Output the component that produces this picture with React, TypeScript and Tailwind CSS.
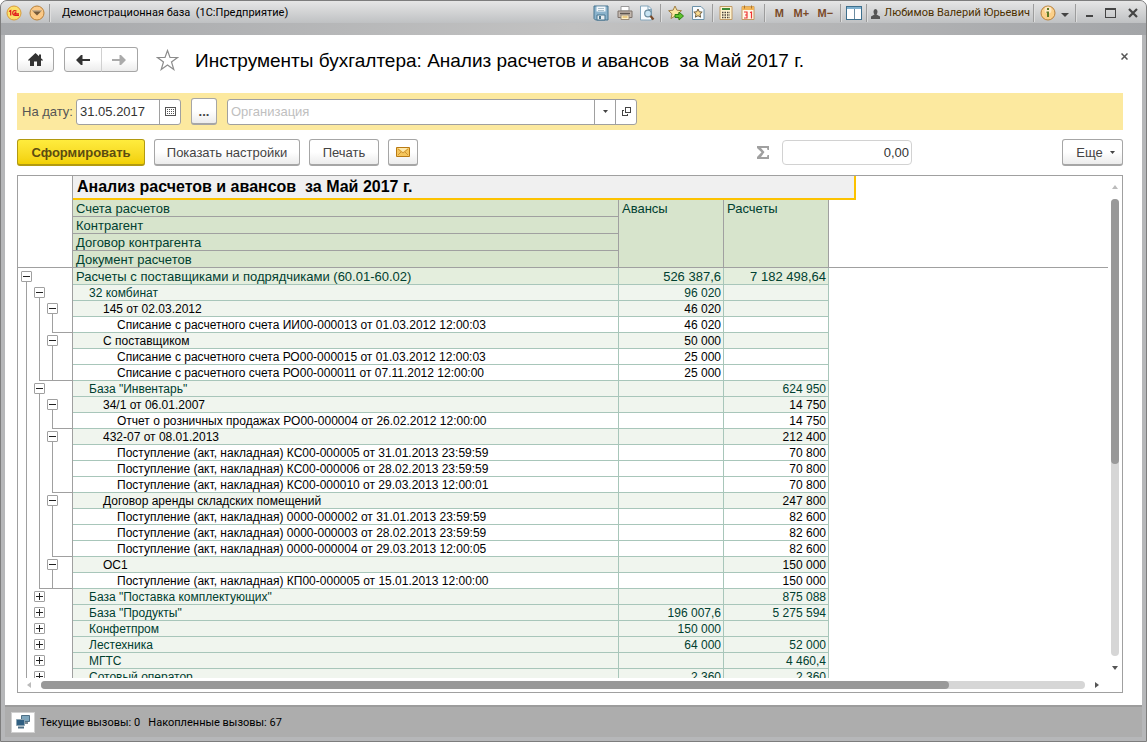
import React from 'react';

type Slot = 'none' | 'line' | 'end' | 'minus' | 'plus';

interface Row {
  level: number;
  text: string;
  advance?: string;
  balance?: string;
  tree: string;
}

// One letter per tree level: m - open, p - closed, l - line, e - end of group, space - nothing
const slotNames: Record<string, Slot> = { m: 'minus', p: 'plus', l: 'line', e: 'end', ' ': 'none' };

const rows: Row[] = [
  { level: 0, text: 'Расчеты с поставщиками и подрядчиками (60.01-60.02)', advance: '526 387,6', balance: '7 182 498,64', tree: 'm  ' },
  { level: 1, text: '32 комбинат', advance: '96 020', tree: 'lm ' },
  { level: 2, text: '145 от 02.03.2012', advance: '46 020', tree: 'llm' },
  { level: 3, text: 'Списание с расчетного счета ИИ00-000013 от 01.03.2012 12:00:03', advance: '46 020', tree: 'lle' },
  { level: 2, text: 'С поставщиком', advance: '50 000', tree: 'llm' },
  { level: 3, text: 'Списание с расчетного счета РО00-000015 от 01.03.2012 12:00:03', advance: '25 000', tree: 'lll' },
  { level: 3, text: 'Списание с расчетного счета РО00-000011 от 07.11.2012 12:00:00', advance: '25 000', tree: 'lee' },
  { level: 1, text: 'База "Инвентарь"', balance: '624 950', tree: 'lm ' },
  { level: 2, text: '34/1 от 06.01.2007', balance: '14 750', tree: 'llm' },
  { level: 3, text: 'Отчет о розничных продажах РО00-000004 от 26.02.2012 12:00:00', balance: '14 750', tree: 'lle' },
  { level: 2, text: '432-07 от 08.01.2013', balance: '212 400', tree: 'llm' },
  { level: 3, text: 'Поступление (акт, накладная) КС00-000005 от 31.01.2013 23:59:59', balance: '70 800', tree: 'lll' },
  { level: 3, text: 'Поступление (акт, накладная) КС00-000006 от 28.02.2013 23:59:59', balance: '70 800', tree: 'lll' },
  { level: 3, text: 'Поступление (акт, накладная) КС00-000010 от 29.03.2013 12:00:01', balance: '70 800', tree: 'lle' },
  { level: 2, text: 'Договор аренды складских помещений', balance: '247 800', tree: 'llm' },
  { level: 3, text: 'Поступление (акт, накладная) 0000-000002 от 31.01.2013 23:59:59', balance: '82 600', tree: 'lll' },
  { level: 3, text: 'Поступление (акт, накладная) 0000-000003 от 28.02.2013 23:59:59', balance: '82 600', tree: 'lll' },
  { level: 3, text: 'Поступление (акт, накладная) 0000-000004 от 29.03.2013 12:00:05', balance: '82 600', tree: 'lle' },
  { level: 2, text: 'ОС1', balance: '150 000', tree: 'llm' },
  { level: 3, text: 'Поступление (акт, накладная) КП00-000005 от 15.01.2013 12:00:00', balance: '150 000', tree: 'lee' },
  { level: 1, text: 'База "Поставка комплектующих"', balance: '875 088', tree: 'lp ' },
  { level: 1, text: 'База "Продукты"', advance: '196 007,6', balance: '5 275 594', tree: 'lp ' },
  { level: 1, text: 'Конфетпром', advance: '150 000', tree: 'lp ' },
  { level: 1, text: 'Лестехника', advance: '64 000', balance: '52 000', tree: 'lp ' },
  { level: 1, text: 'МГТС', balance: '4 460,4', tree: 'lp ' },
  { level: 1, text: 'Сотовый оператор', advance: '2 360', balance: '2 360', tree: 'lp ' },
];

const indents = ['pl-[3px]', 'pl-[16px]', 'pl-[30px]', 'pl-[44px]'];
const rowColors = [
  'bg-[#e4eedd] text-[#004030]',
  'bg-[#f0f5ee] text-[#004030]',
  'bg-[#f0f5ee] text-black',
  'bg-white text-black',
];

const btn = 'flex items-center justify-center rounded-[3px] border border-[#a6a6a6] bg-linear-to-b from-white from-50% to-[#ececec] text-[#444]';

function TreeSlot({ kind }: { kind: Slot }) {
  if (kind === 'minus' || kind === 'plus') {
    return (
      <span className="flex w-[13px] flex-col items-center">
        <button
          aria-label={kind === 'minus' ? 'Свернуть' : 'Развернуть'}
          className="flex size-[11px] shrink-0 items-center justify-center rounded-[1px] border border-[#a0a0a0] bg-white"
        >
          <svg width="7" height="7" viewBox="0 0 7 7" shapeRendering="crispEdges" fill="#222">
            <path d={kind === 'minus' ? 'M0 3h7v1H0z' : 'M0 3h3V0h1v3h3v1H4v3H3V4H0z'} />
          </svg>
        </button>
        {kind === 'minus' && <span className="w-px flex-1 bg-[#a0a0a0]" />}
      </span>
    );
  }
  return <span className="w-[13px]" />;
}

function TreeCell({ row }: { row: Row }) {
  const slots = row.tree.split('').map((c) => slotNames[c]);
  const firstEnd = slots.indexOf('end');
  return (
    <div className={`flex w-[54px] pl-[2px] ${row.level === 0 ? 'h-[17px]' : 'h-[16px]'}`}>
      {slots.map((kind, i) => {
        if (kind === 'line' || kind === 'end') {
          const elbow = firstEnd >= 0 && i >= firstEnd;
          return (
            <span key={i} className="flex w-[13px]">
              <span className={`w-[6px] border-[#a0a0a0] ${elbow && i > firstEnd ? 'border-b' : ''}`} />
              <span className={`w-[7px] border-l border-[#a0a0a0] ${elbow ? 'border-b' : ''}`} />
            </span>
          );
        }
        return (
          <span key={i} className={`flex ${row.level === 0 ? 'pt-[3px]' : 'pt-[2px]'}`}>
            <TreeSlot kind={kind} />
          </span>
        );
      })}
      <span className={`flex-1 border-[#a0a0a0] ${firstEnd >= 0 ? 'border-b' : ''}`} />
    </div>
  );
}

function Report() {
  const headCell = 'border-r border-b border-[#a0a0a0] bg-[#d7e4cc] p-0 pt-px pl-[3px] text-left align-top font-normal';
  const cell = 'overflow-hidden border-r border-b border-[#a8c6ba] p-0 pt-px whitespace-nowrap';
  return (
    <table className="w-full table-fixed border-separate border-spacing-0 text-[12px] leading-[14px]">
      <colgroup>
        <col className="w-[55px]" />
        <col className="w-[546px]" />
        <col className="w-[105px]" />
        <col className="w-[105px]" />
        <col className="w-[27px]" />
        <col />
      </colgroup>
      <thead className="text-[13px] leading-[15px] text-[#004030]">
        <tr>
          <td rowSpan={5} className="border-r border-b border-[#a0a0a0] p-0" />
          <th colSpan={4} className="h-[24px] border-r-2 border-b-2 border-[#fcc200] bg-[#f0f0f0] p-0 pl-[4px] text-left text-[16px] leading-[20px] font-bold whitespace-pre text-black">
            Анализ расчетов и авансов  за Май 2017 г.
          </th>
          <td className="p-0" />
        </tr>
        <tr>
          <th className={`h-[17px] ${headCell}`}>Счета расчетов</th>
          <th rowSpan={4} className={headCell}>Авансы</th>
          <th rowSpan={4} className={headCell}>Расчеты</th>
          <td rowSpan={4} colSpan={2} className="border-b border-[#a0a0a0] p-0" />
        </tr>
        <tr><th className={`h-[17px] ${headCell}`}>Контрагент</th></tr>
        <tr><th className={`h-[17px] ${headCell}`}>Договор контрагента</th></tr>
        <tr><th className={`h-[17px] ${headCell}`}>Документ расчетов</th></tr>
      </thead>
      <tbody>
        {rows.map((row, i) => (
          <tr key={i} className={row.level === 0 ? 'text-[13px] leading-[15px]' : ''}>
            <td className="border-r border-[#a0a0a0] p-0"><TreeCell row={row} /></td>
            <td className={`${cell} ${indents[row.level]} ${rowColors[row.level]}`}>{row.text}</td>
            <td className={`${cell} pr-[2px] text-right ${rowColors[row.level]}`}>{row.advance}</td>
            <td className={`${cell} pr-[2px] text-right ${rowColors[row.level]}`}>{row.balance}</td>
          </tr>
        ))}
      </tbody>
    </table>
  );
}

function Sep() {
  return <span className="mx-[3px] h-[18px] w-[2px] border-l border-[#9c9c9c] bg-[#dedede]" />;
}

function BarButton({ label, className, children }: { label: string; className: string; children: React.ReactNode }) {
  return (
    <button aria-label={label} className={`flex h-[22px] shrink-0 items-center justify-center ${className}`}>
      {children}
    </button>
  );
}

function TitleBar() {
  return (
    <header className="flex h-[34px] shrink-0 items-start bg-linear-to-r from-[#a6a8ab] via-[#c2c2c2] to-[#a3a5a8] text-[11px]">
      <div className="flex h-[22px] w-full items-center bg-linear-to-b from-[#e6e6e6] to-[#bfc1c3] pt-[2px]">
        <BarButton label="Главное меню" className="ml-[5px] w-4">
          <svg width="16" height="16" viewBox="0 0 16 16">
            <circle cx="8" cy="8" r="7" fill="#fbe06a" stroke="#d89a3c" />
            <path d="M3 6.500 4.700 5.500v5M10.500 6.300C8.500 4.800 6.700 6 6.700 8s1.300 2.400 2.800 2.400H13M10.300 8c-.8-.6-1.600-.2-1.600.4s.6.500 1.200.5H13" fill="none" stroke="#e0191c" strokeWidth="1.200" />
          </svg>
        </BarButton>
        <BarButton label="Сервис" className="ml-[6px] w-[18px]">
          <svg width="16" height="16" viewBox="0 0 16 16">
            <circle cx="8" cy="8" r="7" fill="#fbc987" stroke="#b8803a" />
            <path d="M3 5.500h10L8 10.500z" fill="#75593a" />
            <path d="M3.500 5.500h9v1h-9z" fill="#fff0d5" opacity=".6" />
          </svg>
        </BarButton>
        <Sep />
        <h1 className="ml-[8px] flex-1 truncate pt-px font-[Roboto] whitespace-pre text-black">Демонстрационная база  (1С:Предприятие)</h1>
        <BarButton label="Сохранить" className="w-6">
          <svg width="16" height="16" viewBox="0 0 16 16">
            <path d="M1 1h14v14H2.500L1 13.500z" fill="#8bb3cc" stroke="#47758f" />
            <path d="M3.500 1.500h9v5h-9z" fill="#f4f8fa" />
            <path d="M5 3.500h6M5 5.500h6" stroke="#aac0cc" />
            <path d="M4 10h8v5H4z" fill="#e8eef1" stroke="#47758f" />
            <path d="M6 11h2v3H6z" fill="#47758f" />
          </svg>
        </BarButton>
        <BarButton label="Печать" className="w-6">
          <svg width="16" height="16" viewBox="0 0 16 16">
            <path d="M4 1.500h8V6H4z" fill="#fff" stroke="#999" />
            <path d="M1 6h14v6.500H1z" fill="#c4b9b0" stroke="#7d726b" />
            <path d="M3 8.500h10" stroke="#5d5550" strokeWidth="1.500" />
            <path d="M4 10h8v4.500H4z" fill="#fff2ca" stroke="#9a8a78" />
            <path d="M5.500 12h5" stroke="#d9a441" />
          </svg>
        </BarButton>
        <BarButton label="Предварительный просмотр" className="w-5">
          <svg width="16" height="16" viewBox="0 0 16 16">
            <path d="M1.500 1h8l3 3v11h-11z" fill="#f8fcff" stroke="#84a6bb" />
            <path d="M9 1v3.500h3.500" fill="none" stroke="#84a6bb" />
            <circle cx="9" cy="8.500" r="3.300" fill="#c8e4f3" stroke="#6c8da0" strokeWidth="1.200" />
            <path d="m11.500 11 3 3.500" stroke="#7a4a28" strokeWidth="2.200" />
          </svg>
        </BarButton>
        <Sep />
        <BarButton label="Добавить в избранное" className="w-[22px]">
          <svg width="16" height="16" viewBox="0 0 16 16">
            <path d="m7 1 1.900 4.200 4.600.5L10 8.800l1 4.700-4-2.400-4 2.400 1-4.700L.6 5.700l4.500-.5z" fill="#fbe6a0" stroke="#a08048" />
            <path d="M7 9.500h4V7l4.500 4-4.500 4v-2.500H7z" fill="#5fc32e" stroke="#2d8013" />
          </svg>
        </BarButton>
        <BarButton label="Избранное" className="w-[22px]">
          <svg width="14" height="16" viewBox="0 0 14 16">
            <path d="M1.500 1.500h8.500l3 3v10H1.500z" fill="#f8fcff" stroke="#6c92a9" />
            <path d="m7 4 1.300 2.800 2.900.3L9 9.200l.6 3L7 10.700l-2.600 1.500.6-3-2.200-2.100 2.900-.3z" fill="#fbdc90" stroke="#6f5d40" />
          </svg>
        </BarButton>
        <Sep />
        <BarButton label="Калькулятор" className="w-[18px]">
          <svg width="14" height="16" viewBox="0 0 14 16">
            <path d="M1 1.500h12v13H1z" fill="#fff3cf" stroke="#c19a64" />
            <path d="M3 3h8v2H3z" fill="#3c8a38" />
            <path d="M3 7.500h8M3 10h8M3 12.500h8" stroke="#4a423c" strokeWidth="1.400" strokeDasharray="1.500 1" />
          </svg>
        </BarButton>
        <BarButton label="Календарь" className="w-[26px]">
          <svg width="14" height="16" viewBox="0 0 14 16">
            <path d="M1 1.500h12v13H1z" fill="#fff8e8" stroke="#c19a64" />
            <path d="M1 1.500h12V5H1z" fill="#f3b556" />
            <path d="M3.500.500v3M10.500.500v3" stroke="#a97431" />
            <path d="M3 7h3v3H4h2v3H3M9 7.500l1.500-.500v6.500" fill="none" stroke="#e33" strokeWidth="1.200" />
          </svg>
        </BarButton>
        <Sep />
        <BarButton label="M" className="w-5 font-bold text-[#7a4a28]">M</BarButton>
        <BarButton label="M+" className="w-6 font-bold text-[#7a4a28]">M+</BarButton>
        <BarButton label="M-" className="w-6 font-bold text-[#7a4a28]">M−</BarButton>
        <Sep />
        <BarButton label="Панели" className="w-[18px]">
          <svg width="16" height="14" viewBox="0 0 16 14" shapeRendering="crispEdges">
            <path d="M.500.500h15v13H.500z" fill="#fff" stroke="#3d6f8d" />
            <path d="M1 1h14v2H1z" fill="#7fb1d0" />
            <path d="M8 3v10" stroke="#6b8ba0" />
          </svg>
        </BarButton>
        <Sep />
        <button className="flex items-center gap-1 pt-px font-[Roboto] whitespace-nowrap text-[#4c3000]">
          <svg width="9" height="10" viewBox="0 0 9 10" fill="#555">
            <path d="M2.500 2.500a2 2.500 0 0 1 4 0c0 1.500-.6 2.500-1 3L9 7.500V10H0V7.500l3.500-2c-.4-.5-1-1.500-1-3z" />
          </svg>
          Любимов Валерий Юрьевич
        </button>
        <Sep />
        <BarButton label="О программе" className="w-5">
          <svg width="16" height="16" viewBox="0 0 16 16">
            <circle cx="8" cy="8" r="7" fill="#fbd08a" stroke="#b8803a" />
            <circle cx="8" cy="5" r="3.500" fill="#fff" opacity=".5" />
            <path d="M7 3h2v2H7zM6.500 6.500H9V12H7V8h-.5z" fill="#5d7a24" />
          </svg>
        </BarButton>
        <BarButton label="Дополнительно" className="w-[14px]">
          <svg width="8" height="5" viewBox="0 0 8 5" className="mt-[5px]" fill="#444"><path d="M0 0h8L4 4z" /></svg>
        </BarButton>
        <Sep />
        <BarButton label="Свернуть окно" className="w-[18px]">
          <svg width="7" height="10" viewBox="0 0 7 10" shapeRendering="crispEdges"><path d="M0 7h7v2H0z" fill="#444" /></svg>
        </BarButton>
        <BarButton label="Развернуть окно" className="w-6">
          <svg width="11" height="10" viewBox="0 0 11 10" shapeRendering="crispEdges"><path d="M.5 1h10v8.500H.5z" fill="none" stroke="#444" /><path d="M0 0h11v2H0z" fill="#444" /></svg>
        </BarButton>
        <BarButton label="Закрыть окно" className="mr-[2px] w-[22px]">
          <svg width="10" height="10" viewBox="0 0 10 10"><path d="m1 1 8 8M9 1 1 9" stroke="#444" strokeWidth="2.200" /></svg>
        </BarButton>
      </div>
    </header>
  );
}

function Toolbar() {
  return (
    <div className="mt-[9px] flex shrink-0 items-center gap-[9px] text-[13px]">
      <button className="h-[27px] w-[128px] rounded-[3px] border border-b-2 border-[#b29a10] bg-linear-to-b from-[#ffec3d] to-[#f2d000] pt-px font-bold text-[#5c4c10]">Сформировать</button>
      <button className={`h-[27px] w-[146px] border-b-2 pt-px ${btn}`}>Показать настройки</button>
      <button className={`h-[27px] w-[70px] border-b-2 pt-px ${btn}`}>Печать</button>
      <button aria-label="Отправить по почте" className={`h-[27px] w-[30px] border-b-2 ${btn}`}>
        <svg width="14" height="10" viewBox="0 0 14 10">
          <path d="M.5.5h13v9H.5z" fill="#f6c65c" />
          <path d="M2 1h10L7 5z" fill="#fde9ae" />
          <path d="M.5.5h13v9H.5z" fill="none" stroke="#b97a14" />
          <path d="m2 2 5 4 5-4M2 8l3-3M12 8 9 5" fill="none" stroke="#c48a2a" strokeWidth=".8" />
        </svg>
      </button>
      <div className="ml-auto flex items-center gap-[13px]">
        <svg width="12" height="13" viewBox="0 0 12 13" fill="#a0a0a0"><path d="M0 0h12v4h-1.500L10 2H4l3.500 4L4 11h6l.5-2H12v4H0v-2l4.500-4.800L0 2z" /></svg>
        <input aria-label="Сумма" defaultValue="0,00" className="h-[25px] w-[130px] rounded-[4px] border border-[#d2d2d2] bg-white pr-[2px] text-right text-[#333]" />
      </div>
      <button className={`ml-[141px] h-[27px] w-[61px] gap-[7px] border-b-2 pt-px pl-[6px] ${btn}`}>
        Еще
        <svg width="5" height="3" viewBox="0 0 5 3" fill="#444"><path d="M0 0h5L2.500 3z" /></svg>
      </button>
    </div>
  );
}

function Filters() {
  return (
    <div className="mt-[21px] flex h-[37px] shrink-0 items-center bg-[#fce99f] pl-[5px] text-[13px] text-[#555]">
      <label htmlFor="date" className="w-[54px] whitespace-nowrap">На дату:</label>
      <div className="flex h-[26px] w-[105px] overflow-hidden rounded-[3px] border border-[#a0a0a0] bg-white">
        <input id="date" defaultValue="31.05.2017" className="w-[82px] pl-[3px] text-[#333]" />
        <button aria-label="Выбрать дату" className="flex flex-1 items-center justify-center border-l border-[#a0a0a0]">
          <svg width="11" height="9" viewBox="0 0 11 9" shapeRendering="crispEdges">
            <path d="M.5.5h10v8H.5z" fill="#fff" stroke="#555" />
            <path d="M2 2.500h7M2 4.500h7M2 6.500h7" stroke="#555" strokeDasharray="1 1" />
          </svg>
        </button>
      </div>
      <button aria-label="Период" className={`ml-[10px] h-[27px] w-[26px] border-b-2 pt-[2px] font-bold ${btn}`}>...</button>
      <div className="ml-[10px] flex h-[26px] w-[410px] overflow-hidden rounded-[3px] border border-[#a0a0a0] bg-white">
        <input aria-label="Организация" placeholder="Организация" className="flex-1 pl-[3px] placeholder:text-[#c0c0c0]" />
        <button aria-label="Выбрать из списка" className="flex w-[21px] items-center justify-center border-l border-[#a0a0a0]">
          <svg width="5" height="3" viewBox="0 0 5 3" fill="#444"><path d="M0 0h5L2.500 3z" /></svg>
        </button>
        <button aria-label="Открыть" className="flex w-[21px] items-center justify-center border-l border-[#a0a0a0]">
          <svg width="9" height="9" viewBox="0 0 9 9" fill="none" stroke="#444" shapeRendering="crispEdges">
            <path d="M3.500.5h5v5h-5zM2 3.500H.5v5h5V7" />
          </svg>
        </button>
      </div>
    </div>
  );
}

export default function App() {
  return (
    <div className="flex h-screen flex-col overflow-hidden rounded-t-[7px] border border-[#7d7d7d] bg-[#b6b7b9] font-['Liberation_Sans',Arial,sans-serif]">
      <TitleBar />
      <main className="mx-[4px] flex min-h-0 flex-1 flex-col bg-white pt-3 pr-[19px] pb-3 pl-3">
        <div className="flex h-[25px] shrink-0 items-center">
          <button aria-label="Начальная страница" className={`h-[25px] w-[37px] ${btn}`}>
            <svg width="15" height="13" viewBox="0 0 15 13" fill="#333"><path d="M7.500 0 11 3.300V1.500h2v3.700L15 7l-1 1-1-1v6H9V8.500H6V13H2V7L1 8 0 7z" /></svg>
          </button>
          <div className="ml-[10px] flex h-[25px] w-[74px]">
            <button aria-label="Назад" className={`flex-1 rounded-r-none ${btn}`}>
              <svg width="14" height="10" viewBox="0 0 14 10" fill="#333"><path d="M0 5 5 0h1.500v4H14v2H6.500v4H5z" /></svg>
            </button>
            <button aria-label="Вперед" className={`-ml-px flex-1 rounded-l-none border-l-[#d0d0d0] ${btn}`}>
              <svg width="14" height="10" viewBox="0 0 14 10" fill="#aaa"><path d="M14 5 9 0H7.500v4H0v2h7.500v4H9z" /></svg>
            </button>
          </div>
          <button aria-label="В избранное" className="ml-[18px]">
            <svg width="23" height="22" viewBox="0 0 23 22" fill="none" stroke="#8c8c8c" strokeWidth="1.200"><path d="m11.500 1.500 2.500 7h7.500l-6 4.500 2.300 7.500-6.300-4.500-6.300 4.500L7.500 13l-6-4.500H9z" /></svg>
          </button>
          <h2 className="ml-[16px] flex-1 truncate pt-[2px] text-[19px] leading-[25px] whitespace-pre text-black">Инструменты бухгалтера: Анализ расчетов и авансов  за Май 2017 г.</h2>
          <button aria-label="Закрыть" className="-mr-[5px] mb-[6px] flex w-[15px] justify-end">
            <svg width="7" height="7" viewBox="0 0 7 7"><path d="m.5.5 6 6M6.500.5l-6 6" stroke="#555" strokeWidth="1.500" /></svg>
          </button>
        </div>

        <Filters />
        <Toolbar />

        <div className="mt-[9px] flex min-h-0 flex-1 flex-col border border-[#a0a0a0] bg-white">
          <div className="flex min-h-0 flex-1">
            <div className="min-w-0 flex-1 overflow-hidden"><Report /></div>
            <div className="flex w-[14px] flex-col items-center pt-[9px] pb-[8px]">
              <svg width="6" height="4" viewBox="0 0 6 4" fill="#bbb"><path d="M0 4h6L3 0z" /></svg>
              <div className="my-[10px] w-2 flex-1 rounded-full bg-[#d6d6d6]">
                <div className="h-[58%] rounded-full bg-[#999]" />
              </div>
              <svg width="6" height="4" viewBox="0 0 6 4" fill="#555"><path d="M0 0h6L3 4z" /></svg>
            </div>
          </div>
          <div className="flex h-[14px] shrink-0 items-center pr-[23px] pl-[9px]">
            <svg width="4" height="6" viewBox="0 0 4 6" fill="#bbb"><path d="M4 0v6L0 3z" /></svg>
            <div className="mx-[10px] h-2 flex-1 rounded-full bg-[#d6d6d6]">
              <div className="h-2 w-[87%] rounded-full bg-[#999]" />
            </div>
            <svg width="4" height="6" viewBox="0 0 4 6" fill="#555"><path d="M0 0v6l4-3z" /></svg>
          </div>
        </div>
      </main>
      <footer className="mx-[4px] mb-[4px] flex h-[32px] shrink-0 items-center gap-[5px] border-t-2 border-[#9c9c9c] bg-[#adadad] pl-[6px] text-[11px] text-black">
        <button aria-label="Вызовы сервера" className="flex h-[21px] w-[24px] items-center justify-center border border-[#d0d0d0] bg-white">
          <svg width="16" height="14" viewBox="0 0 16 14">
            <path d="M6.500.5h8v6h-8z" fill="#7ea6bd" stroke="#4e6f84" />
            <path d="M9 8h4" stroke="#7a8a94" strokeWidth="2" />
            <path d="M1.500 4.500h8v6h-8z" fill="#2f5f82" stroke="#8aa3b2" />
            <path d="M3 12.500h6" stroke="#4e6f84" strokeWidth="2" />
          </svg>
        </button>
        <span className="pt-[2px] font-[Roboto] whitespace-pre">Текущие вызовы: 0   Накопленные вызовы: 67</span>
      </footer>
    </div>
  );
}
